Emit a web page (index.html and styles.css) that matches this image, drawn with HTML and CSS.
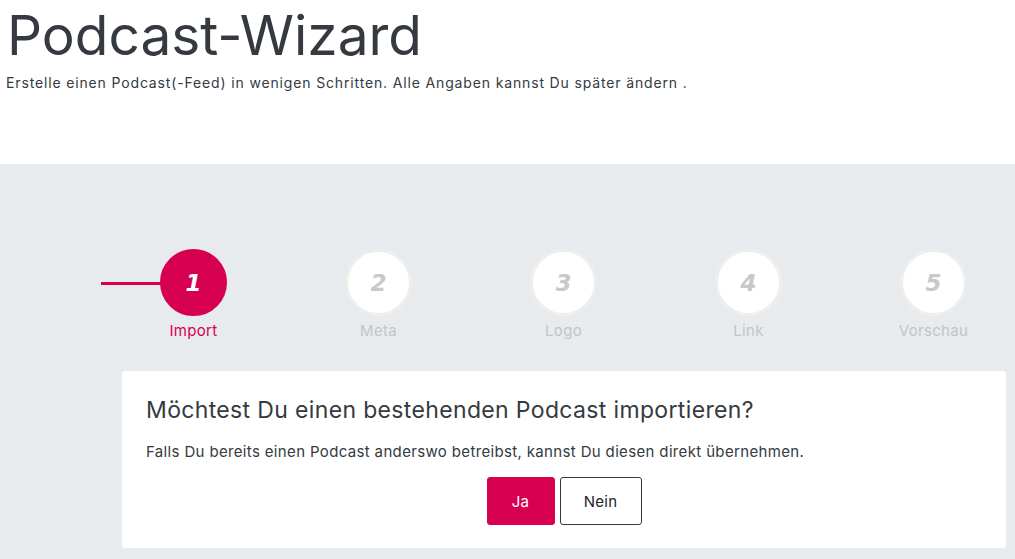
FILE: index.html
```html
<!DOCTYPE html>
<html lang="de">
<head>
<meta charset="utf-8">
<title>Podcast-Wizard</title>
<link rel="stylesheet" href="styles.css">
</head>
<body>
<header class="intro">
  <h1 class="title">Podcast-Wizard</h1>
  <p class="lead">Erstelle einen Podcast(-Feed) in wenigen Schritten. Alle Angaben kannst Du später ändern .</p>
</header>
<section class="wizard">
  <ol class="steps">
    <li class="step active"><span class="bar"></span><span class="circle">1</span><span class="label">Import</span></li>
    <li class="step"><span class="circle">2</span><span class="label">Meta</span></li>
    <li class="step"><span class="circle">3</span><span class="label">Logo</span></li>
    <li class="step"><span class="circle">4</span><span class="label">Link</span></li>
    <li class="step"><span class="circle">5</span><span class="label">Vorschau</span></li>
  </ol>
  <div class="card">
    <h2 class="card-title">Möchtest Du einen bestehenden Podcast importieren?</h2>
    <p class="card-text">Falls Du bereits einen Podcast anderswo betreibst, kannst Du diesen direkt übernehmen.</p>
    <div class="actions">
      <button class="btn btn-primary">Ja</button>
      <button class="btn btn-outline">Nein</button>
    </div>
  </div>
</section>
</body>
</html>
```
FILE: styles.css
```css
html, body {
  margin: 0;
  padding: 0;
  overflow: hidden;
}
body {
  font-family: Inter, "Open Sans", sans-serif;
  color: #343a40;
  background: #fff;
  width: 1015px;
  height: 559px;
}
.intro {
  height: 164px;
  padding: 0 6px;
  box-sizing: border-box;
}
.title {
  margin: 0;
  padding-top: 2px;
  padding-left: 1px;
  font-size: 55px;
  font-weight: 400;
  line-height: 66px;
  letter-spacing: 0;
}
.lead {
  margin: 5px 0 0;
  font-size: 14px;
  line-height: 20px;
  letter-spacing: 0.85px;
}
.wizard {
  background: #e8ebee;
  height: 395px;
  padding-top: 85px;
  box-sizing: border-box;
  overflow: hidden;
}
.steps {
  list-style: none;
  margin: 0 0 0 101px;
  padding: 0;
  display: flex;
  width: 925px;
}
.step {
  position: relative;
  flex: 0 0 185px;
  display: flex;
  flex-direction: column;
  align-items: center;
}
.bar {
  position: absolute;
  left: 0;
  top: 33px;
  width: 60px;
  height: 3px;
  background: #d70050;
}
.circle {
  width: 61px;
  height: 61px;
  border-radius: 50%;
  background: #fff;
  border: 3.5px solid #efeeec;
  display: flex;
  align-items: center;
  justify-content: center;
  font-family: "DejaVu Sans", sans-serif;
  font-weight: 700;
  font-style: italic;
  font-size: 23px;
  color: #c9c9c9;
  position: relative;
}
.step.active .circle {
  background: #d70050;
  border-color: #d70050;
  color: #fff;
}
.label {
  margin-top: 5px;
  font-size: 15px;
  line-height: 20px;
  letter-spacing: 0.3px;
  color: #c4c4c4;
}
.step.active .label {
  color: #d70050;
}
.card {
  margin: 30px 0 0 122px;
  width: 884px;
  background: #fff;
  border-radius: 3px;
  padding: 24px 24px 24px;
  box-sizing: border-box;
  height: 177px;
}
.card-title {
  margin: 0;
  font-size: 23px;
  font-weight: 400;
  line-height: 30px;
  letter-spacing: 0.35px;
}
.card-text {
  margin: 17px 0 0;
  font-size: 15px;
  line-height: 20px;
  letter-spacing: 0.35px;
}
.actions {
  display: flex;
  justify-content: center;
  gap: 5px;
  margin-top: 15px;
}
.btn {
  font-family: inherit;
  font-size: 15px;
  height: 48px;
  border-radius: 3px;
  cursor: pointer;
  letter-spacing: 0.3px;
}
.btn-primary {
  width: 68px;
  background: #d70050;
  color: #fff;
  border: 1px solid #d70050;
}
.btn-outline {
  width: 82px;
  background: #fff;
  color: #212529;
  border: 1px solid #343a40;
}
```
